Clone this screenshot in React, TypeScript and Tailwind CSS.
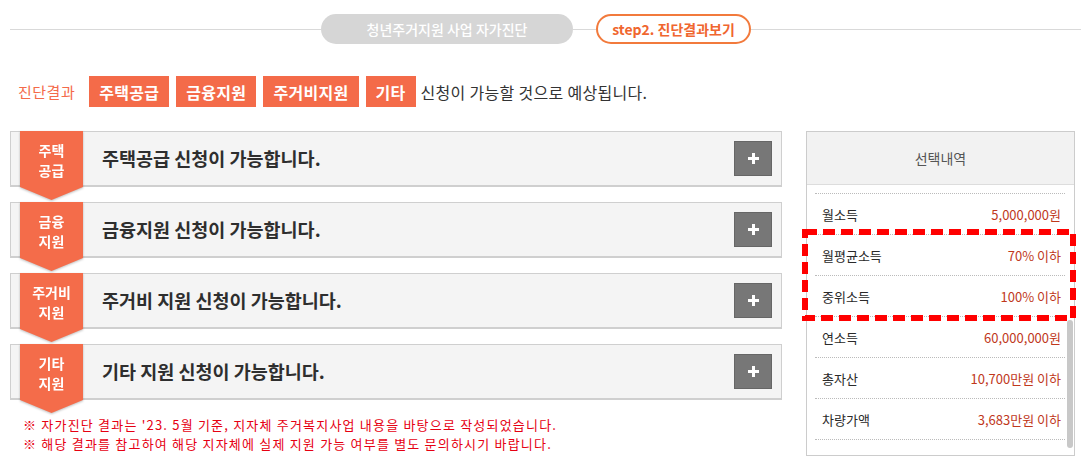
import React from "react";

const items = [
  { b1: "주택", b2: "공급", title: "주택공급 신청이 가능합니다." },
  { b1: "금융", b2: "지원", title: "금융지원 신청이 가능합니다." },
  { b1: "주거비", b2: "지원", title: "주거비 지원 신청이 가능합니다." },
  { b1: "기타", b2: "지원", title: "기타 지원 신청이 가능합니다." },
];

const rows = [
  ["월소득", "5,000,000원"],
  ["월평균소득", "70% 이하"],
  ["중위소득", "100% 이하"],
  ["연소득", "60,000,000원"],
  ["총자산", "10,700만원 이하"],
  ["차량가액", "3,683만원 이하"],
];

const tags = ["주택공급", "금융지원", "주거비지원", "기타"];

export default function App() {
  return (
    <div className="relative w-[1081px] h-[467px] overflow-hidden bg-white font-['Noto_Sans_CJK_KR','Noto_Sans',sans-serif] text-[#333]">
      {/* top steps */}
      <div className="flex items-center pt-[14px] pl-[10px]">
        <div className="w-[311px] h-px bg-[#d9d9d9]" />
        <div className="w-[252px] h-[30px] rounded-full bg-[#d6d6d6] flex items-center justify-center text-white text-[14px] leading-none font-medium">
          청년주거지원 사업 자가진단
        </div>
        <div className="w-[23px] h-px bg-[#d9d9d9]" />
        <div className="w-[155px] h-[30px] rounded-full border-2 border-[#f27a3c] bg-white flex items-center justify-center text-[#f0662f] text-[14px] leading-none font-bold">
          step2. 진단결과보기
        </div>
        <div className="flex-1 h-px bg-[#d9d9d9]" />
      </div>

      {/* results */}
      <div className="flex items-center mt-[32px] pl-[18px] gap-[7px]">
        <span className="text-[15px] text-[#f46a4a] mr-[7px] leading-none tracking-[0.5px]">진단결과</span>
        {tags.map((t) => (
          <span
            key={t}
            className="h-[31px] px-[10px] flex items-center bg-[#f46b49] text-white text-[16px] font-bold leading-none tracking-[0.3px]"
          >
            {t}
          </span>
        ))}
        <span className="ml-[-2px] text-[16px] text-[#333] leading-none tracking-[0.3px]">
          신청이 가능할 것으로 예상됩니다.
        </span>
      </div>

      {/* main */}
      <div className="flex mt-[24px] pl-[10px] gap-[24px]">
        <div className="w-[772px] flex flex-col gap-[15px]">
          {items.map((it) => (
            <div
              key={it.title}
              className="relative h-[56px] border border-b-2 border-[#cfcfcf] bg-[#f4f4f4] flex items-center pl-[91px] pr-[9px]"
            >
              <div className="absolute left-[9px] top-[-1px] w-[63px] h-[69px] drop-shadow-[0_1px_1px_rgba(0,0,0,0.25)]">
                <div className="w-full h-full bg-[#f46c4a] [clip-path:polygon(0_0,100%_0,100%_56px,50%_100%,0_56px)] flex flex-col items-center pt-[9px] text-white text-[14px] leading-[20px] font-bold">
                  <span>{it.b1}</span>
                  <span>{it.b2}</span>
                </div>
              </div>
              <span className="text-[18.5px] font-bold text-[#2e2e2e] leading-none">
                {it.title}
              </span>
              <div className="ml-auto w-[38px] h-[35px] bg-[#777] border border-[#666] flex items-center justify-center">
                <svg width="11" height="11" viewBox="0 0 11 11">
                  <rect x="4" y="0" width="3" height="11" fill="#fff" />
                  <rect x="0" y="4" width="11" height="3" fill="#fff" />
                </svg>
              </div>
            </div>
          ))}
          <div className="pl-[13px] text-[13px] leading-[19px] text-[#e60012] tracking-[1.2px]">
            <p>※ 자가진단 결과는 '23. 5월 기준, 지자체 주거복지사업 내용을 바탕으로 작성되었습니다.</p>
            <p>※ 해당 결과를 참고하여 해당 지자체에 실제 지원 가능 여부를 별도 문의하시기 바랍니다.</p>
          </div>
        </div>

        {/* right panel */}
        <div className="relative w-[269px] h-[325px] border border-[#cccccc] bg-white">
          <div className="h-[53px] bg-[#f2f2f2] border-b border-[#dddddd] flex items-center justify-center text-[14px] text-[#555]">
            선택내역
          </div>
          <div className="ml-[8px] mr-[9px] mt-[8px] border-t border-dotted border-[#bbbbbb]">
            {rows.map(([k, v]) => (
              <div
                key={k}
                className="h-[41px] border-b border-dotted border-[#bbbbbb] flex items-center justify-between pl-[7px] pr-[4px] text-[13px] leading-none"
              >
                <span className="text-[#2a2a2a]">{k}</span>
                <span className="text-[#c0381c]">{v}</span>
              </div>
            ))}
          </div>
          <div className="absolute left-[260px] top-[188px] w-[6px] h-[128px] rounded-full bg-[#c8c8c8]" />
        </div>
      </div>

      {/* red dashed highlight */}
      <svg className="absolute left-[802px] top-[229px]" width="274" height="92" viewBox="0 0 274 92">
        <rect x="3" y="3" width="268" height="86" fill="none" stroke="#ff0000" strokeWidth="6" strokeDasharray="12 6" />
      </svg>
    </div>
  );
}
